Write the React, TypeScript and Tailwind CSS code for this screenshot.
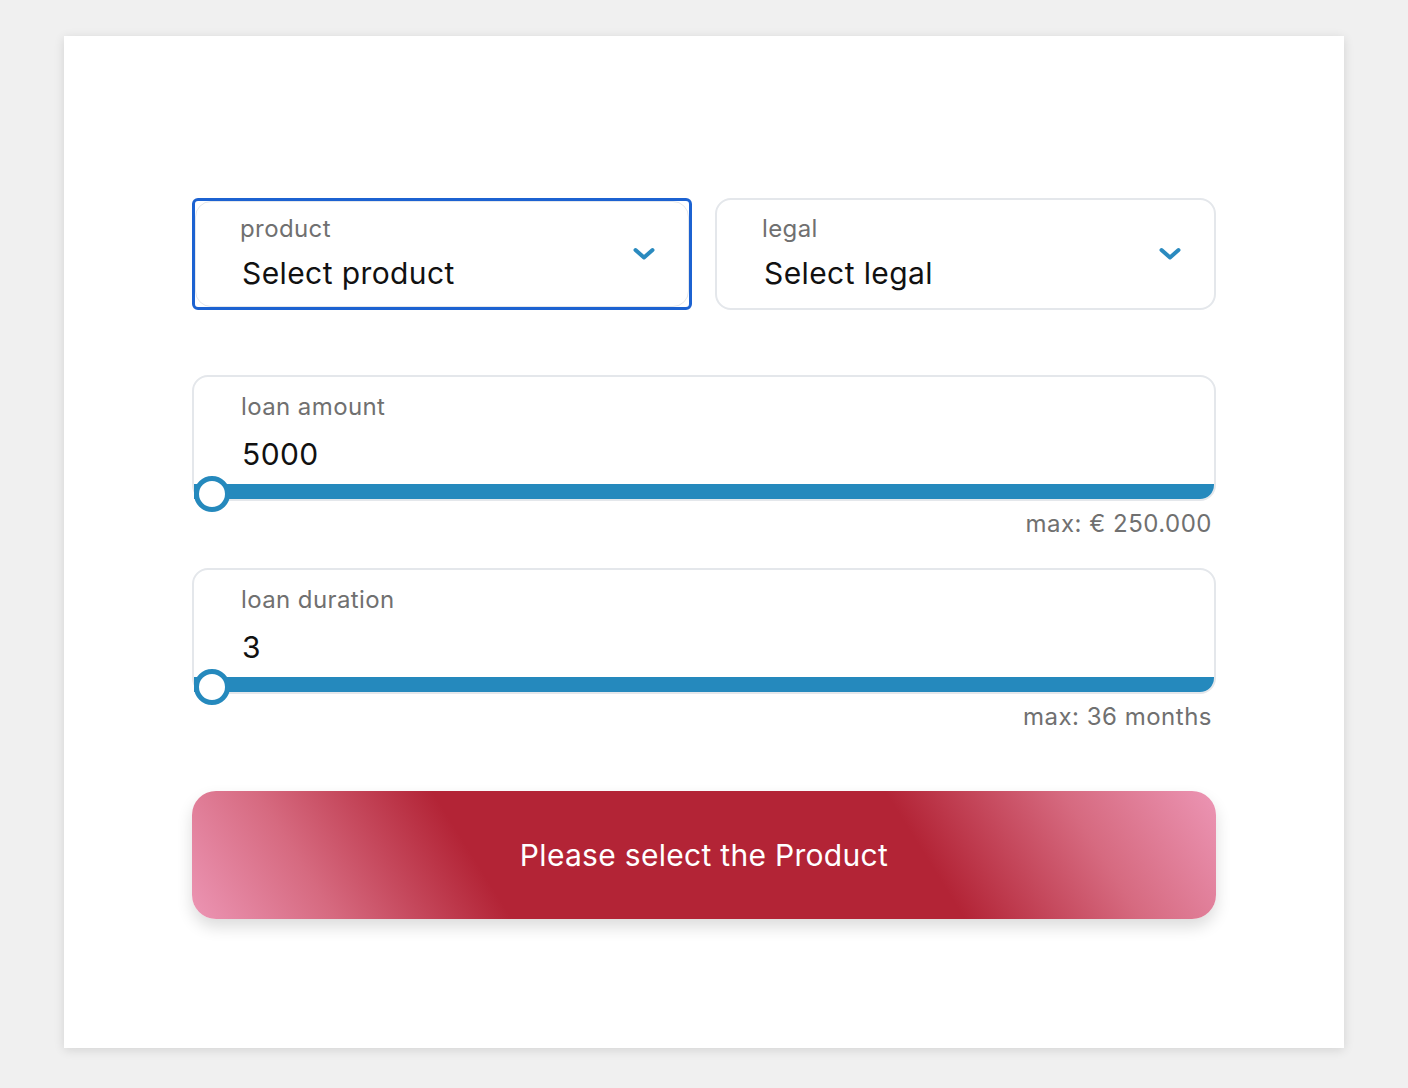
const font = { fontFamily: 'Inter, "Noto Sans", sans-serif' }

function Chevron() {
  return (
    <svg width="24" height="16" viewBox="0 0 24 16" className="shrink-0">
      <polyline
        points="3.5,4 12,11.5 20.5,4"
        fill="none"
        stroke="#2a8abf"
        strokeWidth="4"
        strokeLinecap="round"
        strokeLinejoin="round"
      />
    </svg>
  )
}

function SelectContent({ label, value }: { label: string; value: string }) {
  return (
    <div className="flex h-full items-center justify-between pr-[32px]">
      <div className="-mt-[3px] flex flex-col gap-[12px]">
        <span className="text-[24px] leading-[28px] tracking-[0.4px] text-[#707070]">{label}</span>
        <span className="pl-[2px] text-[30px] leading-[36px] tracking-[0.4px] text-[#111]">{value}</span>
      </div>
      <Chevron />
    </div>
  )
}

function RangeField({ label, value, max }: { label: string; value: string; max: string }) {
  return (
    <div className="flex flex-col">
      <div className="relative flex h-[126px] flex-col rounded-2xl border-2 border-[#e4e7eb]">
        <div className="flex flex-col gap-[15px] pl-[47px] pt-[16px]">
          <span className="text-[24px] leading-[28px] tracking-[0.4px] text-[#707070]">{label}</span>
          <span className="pl-[1px] text-[30px] leading-[36px] tracking-[0.4px] text-[#111]">{value}</span>
        </div>
        <div className="mt-auto h-[15px] rounded-br-[14px] bg-[#2589bd]" />
        {/* slider thumb */}
        <div className="absolute bottom-[-13px] left-0 h-[36px] w-[36px] rounded-full border-[5px] border-[#2589bd] bg-white" />
      </div>
      <div className="mt-[9px] pr-[4px] text-right text-[24px] leading-[28px] tracking-[0.5px] text-[#707070]">
        {max}
      </div>
    </div>
  )
}

export default function App() {
  return (
    <div className="min-h-screen bg-[#f0f0f0] px-16 pb-10 pt-9" style={font}>
      <div className="h-[1012px] bg-white px-32 pt-[162px] shadow-[0_2px_10px_rgba(0,0,0,0.12)]">
        {/* Selects */}
        <div className="flex gap-[23px]">
          <div className="h-[112px] w-[500px] rounded-[6px] border-[3px] border-[#1c62d1]">
            <div className="h-full rounded-2xl border border-[#e4e7eb] pl-[44px]">
              <SelectContent label="product" value="Select product" />
            </div>
          </div>
          <div className="h-[112px] flex-1 rounded-2xl border-2 border-[#e4e7eb] pl-[45px]">
            <SelectContent label="legal" value="Select legal" />
          </div>
        </div>

        {/* Sliders */}
        <div className="mt-[65px] flex flex-col gap-[30px]">
          <RangeField label="loan amount" value="5000" max="max: € 250.000" />
          <RangeField label="loan duration" value="3" max="max: 36 months" />
        </div>

        {/* Submit */}
        <button className="mt-[60px] flex h-[128px] w-full items-center justify-center rounded-[24px] bg-[linear-gradient(58deg,#ec95b4_0%,#d66a80_13%,#b32436_29%,#b32436_70%,#d66a80_86%,#ec95b4_100%)] text-[30px] tracking-[0.3px] text-white shadow-[0_8px_16px_rgba(0,0,0,0.14)]">
          Please select the Product
        </button>
      </div>
    </div>
  )
}
